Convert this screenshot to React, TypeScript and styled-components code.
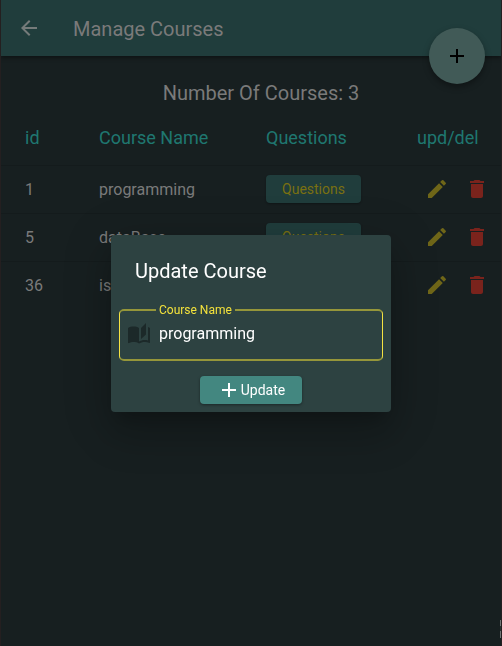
import React, { useState } from "react";
import styled, { createGlobalStyle } from "styled-components";

const GlobalStyle = createGlobalStyle`
  *, *::before, *::after { box-sizing: border-box; }
  body { margin: 0; background: #171f20; font-family: Roboto, sans-serif; }
  button { font-family: inherit; border: 0; padding: 0; cursor: pointer; }
`;

const Page = styled.main`
  position: relative;
  min-height: 100vh;
  border: solid #241f20;
  border-width: 0 1px;
  background: #171f20;
  color: #747879;
  overflow: hidden;
`;

const AppBar = styled.header`
  display: flex;
  align-items: center;
  gap: 32px;
  height: 56px;
  padding: 0 16px;
  background: #203d3c;
  box-shadow: 0 2px 4px rgba(0, 0, 0, 0.4);
`;

const BarTitle = styled.h1`
  margin: 0;
  padding-top: 2px;
  font-size: 20px;
  font-weight: 400;
  line-height: 24px;
  color: #7a7a7a;
`;

const IconButton = styled.button<{ $tone: string; $size: number }>`
  display: grid;
  place-items: center;
  width: ${(p) => p.$size}px;
  height: ${(p) => p.$size}px;
  background: none;
  color: ${(p) => p.$tone};
`;

const Fab = styled.button`
  position: absolute;
  top: 28px;
  right: 16px;
  display: grid;
  place-items: center;
  width: 56px;
  height: 56px;
  border-radius: 50%;
  background: #415a57;
  color: #000;
  box-shadow: 0 3px 6px rgba(0, 0, 0, 0.35);
`;

const EdgeHandle = styled.span`
  position: absolute;
  right: -1px;
  bottom: 8px;
  width: 2px;
  height: 18px;
  background: linear-gradient(#6f7474 0 35%, #2a3131 35% 60%, #6f7474 60%);
`;

const Count = styled.h2`
  margin: 24px 0 0;
  padding-left: 20px;
  text-align: center;
  font-size: 20px;
  font-weight: 400;
  line-height: 26px;
  color: #7a7a7a;
`;

const Table = styled.table`
  width: 100%;
  margin-top: 4px;
  table-layout: fixed;
  border-collapse: collapse;
`;

const Col = styled.col<{ $width?: number }>`
  width: ${(p) => (p.$width ? `${p.$width}px` : "auto")};
`;

const Head = styled.th`
  height: 55px;
  padding: 0;
  text-align: left;
  font-size: 18px;
  font-weight: 400;
  color: #1f7770;
  &:first-child { padding-left: 24px; }
`;

const Cell = styled.td`
  height: 48px;
  padding: 0;
  border-top: 1px solid #141b1c;
  font-size: 16px;
  color: #7a7a7a;
  &:first-child { padding-left: 24px; }
`;

const QuestionsButton = styled.button`
  display: block;
  height: 28px;
  width: 95px;
  border-radius: 4px;
  background: #203d3c;
  color: #7a7011;
  font-size: 14px;
  font-weight: 400;
  box-shadow: 0 1px 2px rgba(0, 0, 0, 0.3);
`;

const Actions = styled.div`
  display: flex;
`;

const Overlay = styled.div`
  position: fixed;
  inset: 0;
  display: grid;
  place-items: center;
`;

const Dialog = styled.form`
  display: flex;
  flex-direction: column;
  width: 280px;
  padding: 24px 8px 8px;
  border-radius: 4px;
  background: #2d4241;
  box-shadow: 0 11px 15px -7px rgba(0, 0, 0, 0.2), 0 24px 38px 3px rgba(0, 0, 0, 0.14), 0 9px 46px 8px rgba(0, 0, 0, 0.12);
`;

const DialogTitle = styled.h2`
  margin: 0 16px 20px;
  font-size: 20px;
  font-weight: 400;
  line-height: 24px;
  color: #fff;
`;

const Field = styled.fieldset`
  min-width: 0;
  height: 58px;
  margin: 0;
  padding: 5px 7px 0;
  border: solid;
  border-width: 2px 1px;
  border-color: #95963a #f5e342;
  border-radius: 5px;
`;

const FieldRow = styled.div`
  display: flex;
  align-items: center;
  gap: 8px;
`;

const Legend = styled.legend`
  margin-left: 29px;
  padding: 0 3px;
  font-size: 12px;
  line-height: 14px;
  color: #f3e13b;
`;

const Input = styled.input`
  flex: 1;
  min-width: 0;
  padding: 0;
  border: 0;
  outline: 0;
  background: none;
  font-family: inherit;
  font-size: 16px;
  line-height: 20px;
  color: #fff;
`;

const UpdateButton = styled.button`
  display: flex;
  align-items: center;
  justify-content: center;
  align-self: center;
  width: 102px;
  height: 28px;
  margin-top: 15px;
  border-radius: 4px;
  background: #438780;
  color: #fff;
  font-size: 14px;
  font-weight: 400;
  box-shadow: 0 1px 3px rgba(0, 0, 0, 0.4);
`;

const paths = {
  back: "M20 11H7.83l5.59-5.59L12 4l-8 8 8 8 1.41-1.41L7.83 13H20v-2z",
  add: "M19 13h-6v6h-2v-6H5v-2h6V5h2v6h6v2z",
  edit: "M3 17.25V21h3.75L17.81 9.94l-3.75-3.75L3 17.25zM20.71 7.04c.39-.39.39-1.02 0-1.41l-2.34-2.34a.9959.9959 0 0 0-1.41 0l-1.83 1.83 3.75 3.75 1.83-1.83z",
  trash: "M6 19c0 1.1.9 2 2 2h8c1.1 0 2-.9 2-2V7H6v12zM19 4h-3.5l-1-1h-5l-1 1H5v2h14V4z",
  book: "M19 1l-5 5v11l5-4.500V1zM1 6v14.650c0 .25.25.5.5.5.1 0 .15-.05.25-.05C3.100 20.450 5.050 20 6.500 20c1.950 0 4.050.4 5.500 1.500V6c-1.450-1.100-3.550-1.500-5.500-1.500S2.450 4.900 1 6zm22 13.500V6c-.6-.45-1.250-.75-2-1v13.500c-1.100-.35-2.300-.5-3.500-.5-1.700 0-4.150.65-5.500 1.500v2c1.350-.85 3.800-1.500 5.500-1.500 1.650 0 3.350.3 4.750 1.050.1.05.15.05.25.05.25 0 .5-.25.5-.5v-1.100z",
};

function Icon({ name, size = 24 }: { name: keyof typeof paths; size?: number }) {
  return (
    <svg width={size} height={size} viewBox="0 0 24 24" fill="currentColor" aria-hidden="true">
      <path d={paths[name]} />
    </svg>
  );
}

const BookIcon = styled.span`
  display: flex;
  color: #1c2929;
`;

const courses = [
  { id: 1, name: "programming" },
  { id: 5, name: "dataBase" },
  { id: 36, name: "is" },
];

export default function App() {
  const [name, setName] = useState("programming");
  return (
    <>
      <GlobalStyle />
      <Page>
        <AppBar>
          <IconButton $tone="#757b7a" $size={24} aria-label="Back">
            <Icon name="back" />
          </IconButton>
          <BarTitle>Manage Courses</BarTitle>
        </AppBar>
        <Fab aria-label="Add course">
          <Icon name="add" />
        </Fab>
        <Count>Number Of Courses: {courses.length}</Count>
        <Table>
          <colgroup>
            <Col $width={98} />
            <Col $width={167} />
            <Col $width={151} />
            <Col />
          </colgroup>
          <thead>
            <tr>
              <Head>id</Head>
              <Head>Course Name</Head>
              <Head>Questions</Head>
              <Head>upd/del</Head>
            </tr>
          </thead>
          <tbody>
            {courses.map((course) => (
              <tr key={course.id}>
                <Cell>{course.id}</Cell>
                <Cell>{course.name}</Cell>
                <Cell>
                  <QuestionsButton>Questions</QuestionsButton>
                </Cell>
                <Cell>
                  <Actions>
                    <IconButton $tone="#6f6618" $size={40} aria-label={`Edit ${course.name}`}>
                      <Icon name="edit" />
                    </IconButton>
                    <IconButton $tone="#7a231c" $size={40} aria-label={`Delete ${course.name}`}>
                      <Icon name="trash" />
                    </IconButton>
                  </Actions>
                </Cell>
              </tr>
            ))}
          </tbody>
        </Table>
        <EdgeHandle />
      </Page>
      <Overlay>
        <Dialog role="dialog" aria-labelledby="dialog-title" onSubmit={(e) => e.preventDefault()}>
          <DialogTitle id="dialog-title">Update Course</DialogTitle>
          <Field>
            <Legend>
              <label htmlFor="course-name">Course Name</label>
            </Legend>
            <FieldRow>
              <BookIcon>
                <Icon name="book" />
              </BookIcon>
              <Input id="course-name" value={name} onChange={(e) => setName(e.target.value)} />
            </FieldRow>
          </Field>
          <UpdateButton type="submit">
            <Icon name="add" />
            Update
          </UpdateButton>
        </Dialog>
      </Overlay>
    </>
  );
}
